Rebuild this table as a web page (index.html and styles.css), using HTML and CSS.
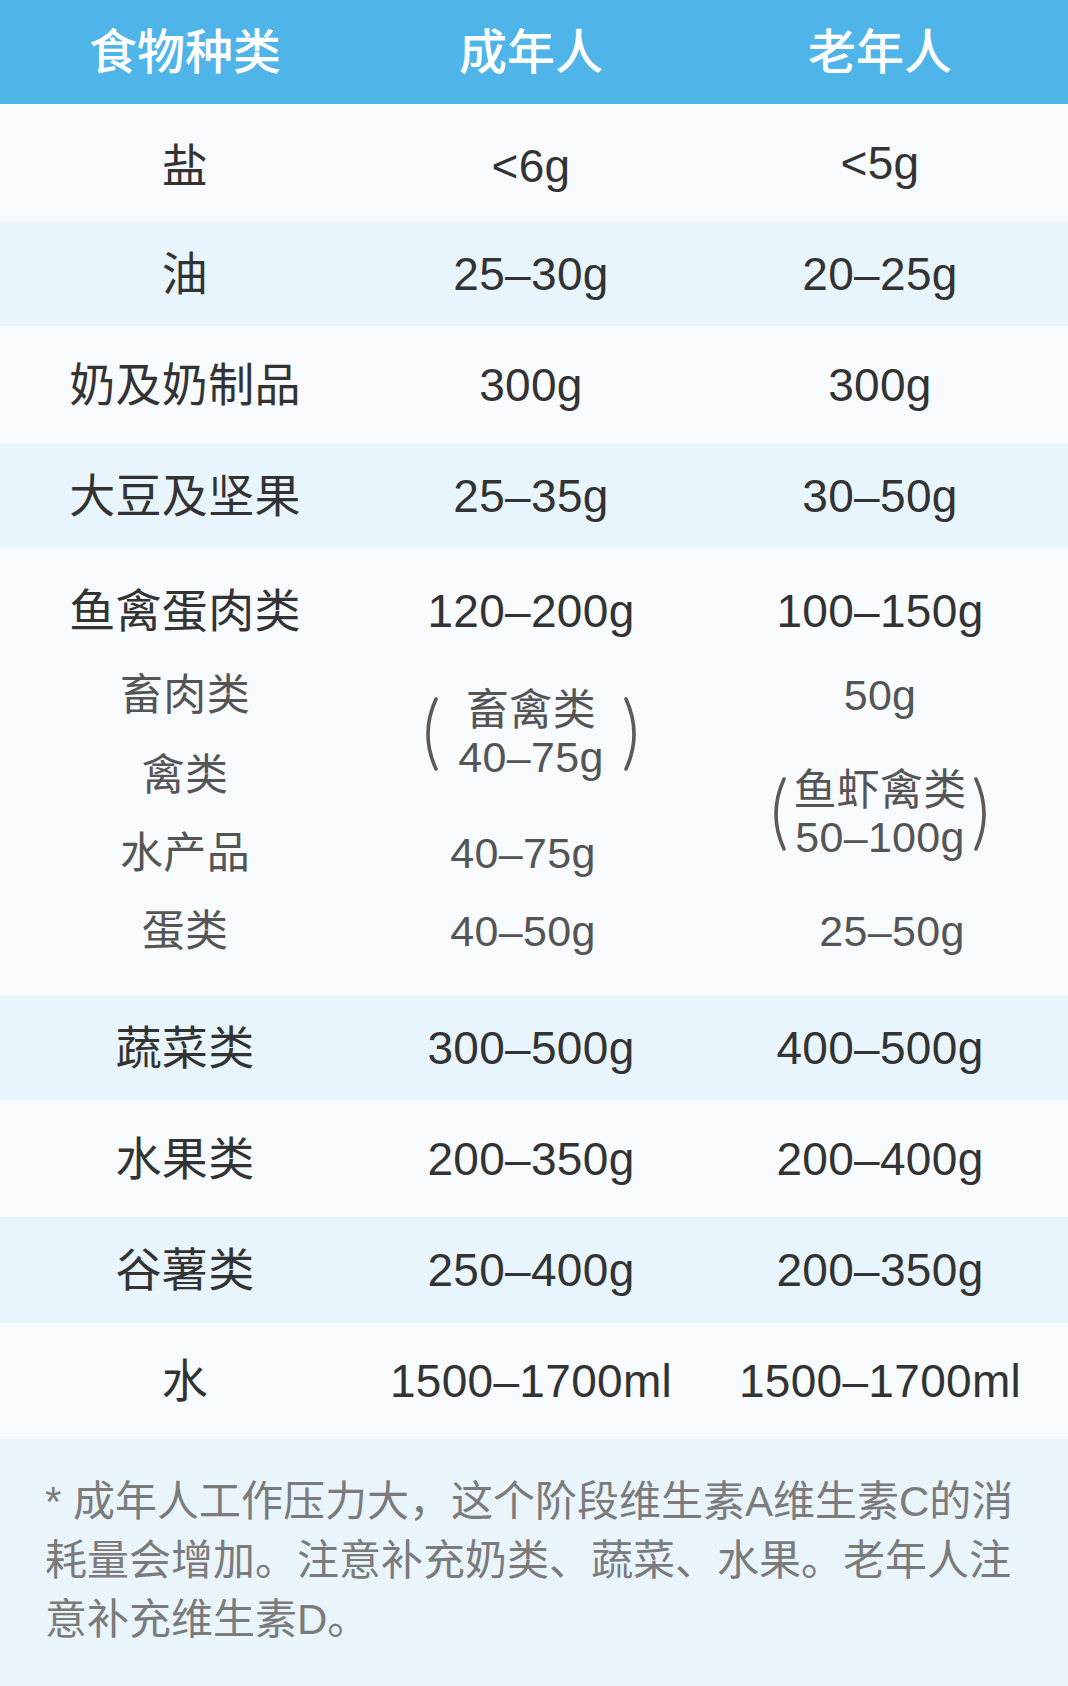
FILE: index.html
```html
<!DOCTYPE html>
<html lang="zh-CN">
<head>
<meta charset="utf-8">
<title>食物种类</title>
<link rel="stylesheet" href="styles.css">
</head>
<body>
<div class="table">
  <div class="row head h104">
    <div class="cell">食物种类</div>
    <div class="cell">成年人</div>
    <div class="cell">老年人</div>
  </div>
  <div class="row light h118">
    <div class="cell low">盐</div>
    <div class="cell low">&lt;6g</div>
    <div class="cell">&lt;5g</div>
  </div>
  <div class="row blue h104">
    <div class="cell">油</div>
    <div class="cell">25–30g</div>
    <div class="cell">20–25g</div>
  </div>
  <div class="row light h117">
    <div class="cell">奶及奶制品</div>
    <div class="cell">300g</div>
    <div class="cell">300g</div>
  </div>
  <div class="row blue h105">
    <div class="cell">大豆及坚果</div>
    <div class="cell">25–35g</div>
    <div class="cell">30–50g</div>
  </div>
  <div class="block light">
    <div class="cell r1 c1">鱼禽蛋肉类</div>
    <div class="cell r1 c2">120–200g</div>
    <div class="cell r1 c3">100–150g</div>

    <div class="cell sub r2 c1">畜肉类</div>
    <div class="cell sub r3 c1">禽类</div>
    <div class="cell sub r4 c1">水产品</div>
    <div class="cell sub r5 c1">蛋类</div>

    <div class="cell sub r23 c2">
      <div class="group gap2">
        <svg class="paren" viewBox="0 0 16 76" width="16" height="76"><path d="M13 3 C2 27 2 49 13 73"/></svg>
        <div class="lines"><div>畜禽类</div><div>40–75g</div></div>
        <svg class="paren" viewBox="0 0 16 76" width="16" height="76"><path d="M3 3 C14 27 14 49 3 73"/></svg>
      </div>
    </div>
    <div class="cell sub r4 c2 shift-l">40–75g</div>
    <div class="cell sub r5 c2 shift-l">40–50g</div>

    <div class="cell sub r2 c3">50g</div>
    <div class="cell sub r34 c3">
      <div class="group gap3">
        <svg class="paren" viewBox="0 0 16 76" width="16" height="76"><path d="M13 3 C2 27 2 49 13 73"/></svg>
        <div class="lines"><div>鱼虾禽类</div><div>50–100g</div></div>
        <svg class="paren" viewBox="0 0 16 76" width="16" height="76"><path d="M3 3 C14 27 14 49 3 73"/></svg>
      </div>
    </div>
    <div class="cell sub r5 c3 shift-r">25–50g</div>
  </div>
  <div class="row blue h105">
    <div class="cell">蔬菜类</div>
    <div class="cell">300–500g</div>
    <div class="cell">400–500g</div>
  </div>
  <div class="row light h117">
    <div class="cell">水果类</div>
    <div class="cell">200–350g</div>
    <div class="cell">200–400g</div>
  </div>
  <div class="row blue h106">
    <div class="cell">谷薯类</div>
    <div class="cell">250–400g</div>
    <div class="cell">200–350g</div>
  </div>
  <div class="row light h116">
    <div class="cell">水</div>
    <div class="cell">1500–1700ml</div>
    <div class="cell">1500–1700ml</div>
  </div>
</div>
<div class="note">
  <p>* 成年人工作压力大，这个阶段维生素A维生素C的消<br>耗量会增加。注意补充奶类、蔬菜、水果。老年人注<br>意补充维生素D。</p>
</div>
</body>
</html>
```
FILE: styles.css
```css
html, body {
  margin: 0;
  padding: 0;
}
body {
  width: 1068px;
  height: 1686px;
  overflow: hidden;
  font-family: "Liberation Sans", "Noto Sans CJK SC", sans-serif;
  color: #333333;
  background: #f7fbfe;
}
.table {
  width: 1068px;
}
.row {
  display: grid;
  grid-template-columns: 370px 322px 376px;
  align-items: center;
  justify-items: center;
}
.cell {
  font-size: 46px;
  line-height: 1;
  white-space: nowrap;
  letter-spacing: 0.3px;
}
.low {
  padding-top: 5px;
}
.head {
  background: #4fb4e8;
  color: #ffffff;
}
.head .cell {
  font-size: 48px;
  font-weight: 500;
  padding-top: 2px;
  letter-spacing: 0;
}
.light {
  background: #f7fbfe;
}
.blue {
  background: #e9f5fc;
}
.h104 { height: 104px; }
.h105 { height: 105px; }
.h106 { height: 106px; }
.h116 { height: 116px; }
.h117 { height: 117px; }
.h118 { height: 118px; }

.block {
  display: grid;
  grid-template-columns: 370px 322px 376px;
  grid-template-rows: 87px 82px 78px 78px 78px;
  align-items: center;
  justify-items: center;
  padding: 19px 0 25px;
  height: 403px;
}
.r1 { grid-row: 1; }
.r2 { grid-row: 2; }
.r3 { grid-row: 3; }
.r4 { grid-row: 4; }
.r5 { grid-row: 5; }
.r23 { grid-row: 2 / 4; }
.r34 { grid-row: 3 / 5; }
.c1 { grid-column: 1; }
.c2 { grid-column: 2; }
.c3 { grid-column: 3; }

.sub {
  font-size: 43px;
  color: #555555;
}
.shift-l {
  margin-right: 16px;
}
.shift-r {
  margin-left: 24px;
}
.group {
  display: flex;
  align-items: center;
}
.gap2 { gap: 19px; }
.gap3 { gap: 6px; }
.lines {
  text-align: center;
  line-height: 47px;
}
.paren path {
  fill: none;
  stroke: #5a5a5a;
  stroke-width: 3.6;
  stroke-linecap: round;
}

.note {
  background: #e9f4fb;
  height: 247px;
  box-sizing: border-box;
  padding: 33px 0 0 45px;
}
.note p {
  margin: 0;
  font-size: 42px;
  line-height: 59px;
  color: #7b7b7b;
  white-space: nowrap;
}
```
